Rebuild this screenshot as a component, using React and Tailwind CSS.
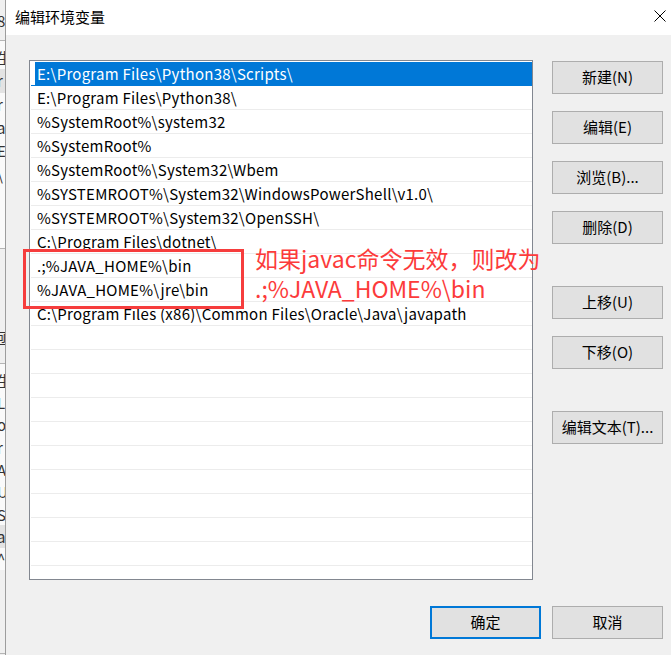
import React from "react";

const FONT = { fontFamily: '"Noto Sans CJK SC", "Noto Sans", sans-serif' };

const paths = [
  "E:\\Program Files\\Python38\\Scripts\\",
  "E:\\Program Files\\Python38\\",
  "%SystemRoot%\\system32",
  "%SystemRoot%",
  "%SystemRoot%\\System32\\Wbem",
  "%SYSTEMROOT%\\System32\\WindowsPowerShell\\v1.0\\",
  "%SYSTEMROOT%\\System32\\OpenSSH\\",
  "C:\\Program Files\\dotnet\\",
  ".;%JAVA_HOME%\\bin",
  "%JAVA_HOME%\\jre\\bin",
  "C:\\Program Files (x86)\\Common Files\\Oracle\\Java\\javapath",
];

const rows = [...paths, ...Array(11).fill("")];

function Btn({ children, primary, className = "" }) {
  return (
    <div
      className={
        "flex items-center justify-center w-[111px] h-[33px] bg-[#e1e1e1] text-[15px] text-black " +
        (primary ? "border-2 border-[#0078d7] " : "border border-[#adadad] ") +
        className
      }
    >
      {children}
    </div>
  );
}

function StripRow({ ch, gray }) {
  return (
    <div className={"h-[23.3px] flex items-center overflow-hidden " + (gray ? "bg-[#e3e3e3]" : "")}>
      <span className="ml-[-3px] text-[15px] leading-none text-[#333]">{ch}</span>
    </div>
  );
}

function LeftStrip() {
  return (
    <div className="w-[5px] h-full flex flex-col overflow-hidden bg-[#f0f0f0] shrink-0">
      <div className="h-[40px] flex items-center overflow-hidden">
        <span className="ml-[-3px] text-[15px] leading-none text-[#333]">8</span>
      </div>
      <div className="h-[1px] bg-[#b5b5b5]" />
      <div className="h-[207px] bg-[#fafafa] pt-[5px] flex flex-col">
        <StripRow ch="生" />
        <StripRow ch="r" gray />
        <StripRow ch="r" />
        <StripRow ch="a" />
        <StripRow ch="E" />
        <StripRow ch="\" />
      </div>
      <div className="h-[1px] bg-[#b5b5b5]" />
      <div className="h-[114px] flex flex-col justify-end pb-[14px]">
        <StripRow ch="亟" />
      </div>
      <div className="h-[1px] bg-[#b5b5b5]" />
      <div className="h-[206px] bg-[#fafafa] pt-[5px] flex flex-col">
        <StripRow ch="生" />
        <StripRow ch="L" />
        <StripRow ch="o" />
        <StripRow ch="r" />
        <StripRow ch="A" />
        <StripRow ch="U" />
        <StripRow ch="S" />
        <StripRow ch="a" gray />
        <StripRow ch="^" />
      </div>
      <div className="flex-1" />
      <div className="h-[1px] bg-[#b5b5b5] mb-[1px]" />
    </div>
  );
}

export default function App() {
  return (
    <div className="relative flex w-[671px] h-[655px] overflow-hidden bg-[#f0f0f0]" style={FONT}>
      <LeftStrip />
      <div className="flex flex-col flex-1 border-l border-[#9d9d9d]">
        <div className="h-[35px] bg-white flex items-center justify-between pl-[9px] pr-[5px] shrink-0">
          <span className="text-[15px] text-black leading-none mt-[-2px]">编辑环境变量</span>
          <svg width="12" height="12" viewBox="0 0 12 12" className="mt-[-3px]">
            <path d="M0.5 0.5 L11.5 11.5 M11.5 0.5 L0.5 11.5" stroke="#000" strokeWidth="1" fill="none" />
          </svg>
        </div>
        <div className="flex-1 flex flex-col pt-[25px] pl-[23px]">
          <div className="flex">
            <div className="w-[504px] h-[520px] border border-[#828790] bg-white pt-[1px] overflow-hidden shrink-0">
              {rows.map((t, i) => (
                <div
                  key={i}
                  className={
                    "h-[24px] ml-[1px] border-b flex " +
                    (i === 0 ? "border-[#0078d7]" : "border-[#ececec]")
                  }
                >
                  <div
                    className={
                      "ml-[4px] flex-1 flex items-center pl-[2px] pt-[1px] text-[15px] tracking-[0.25px] whitespace-nowrap " +
                      (i === 0 ? "bg-[#0078d7] text-white" : "text-black")
                    }
                  >
                    {t}
                  </div>
                </div>
              ))}
            </div>
            <div className="ml-[19px] mt-[1px] flex flex-col">
              <Btn>新建(N)</Btn>
              <Btn className="mt-[17px]">编辑(E)</Btn>
              <Btn className="mt-[17px]">浏览(B)...</Btn>
              <Btn className="mt-[17px]">删除(D)</Btn>
              <Btn className="mt-[42px]">上移(U)</Btn>
              <Btn className="mt-[17px]">下移(O)</Btn>
              <Btn className="mt-[42px]">编辑文本(T)...</Btn>
            </div>
          </div>
          <div className="flex justify-end gap-[11px] mt-[26px] pr-[8px]">
            <Btn primary>确定</Btn>
            <Btn>取消</Btn>
          </div>
        </div>
      </div>

      <div className="absolute left-[23px] top-[249px] w-[221px] h-[60px] border-[3px] border-[#f63d3d]" />
      <div className="absolute left-[255px] top-[243px] text-[23px] leading-[30px] text-[#fc3b3b] whitespace-nowrap">
        <div>如果javac命令无效，则改为</div>
        <div>.;%JAVA_HOME%\bin</div>
      </div>
    </div>
  );
}
